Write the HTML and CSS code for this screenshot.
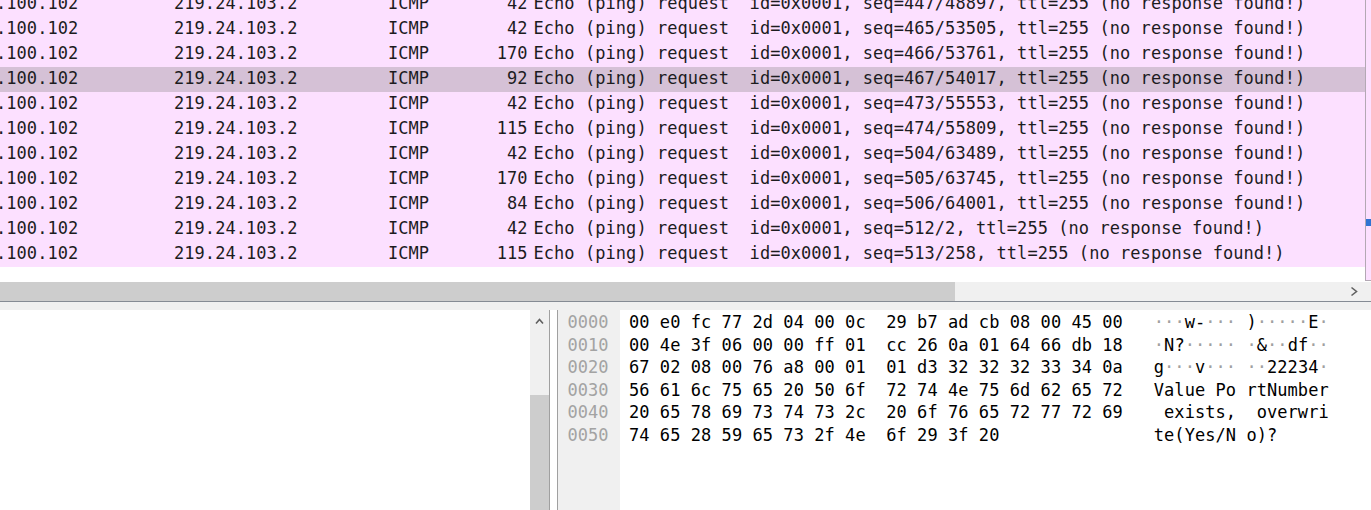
FILE: index.html
```html
<!DOCTYPE html>
<html>
<head>
<meta charset="utf-8">
<link rel="stylesheet" href="styles.css">
</head>
<body>
<div class="app">
  <div class="packets">
    <div class="list">
      <div class="rows">
        <div class="row"><span class="c-src">.100.102</span><span class="c-dst">219.24.103.2</span><span class="c-proto">ICMP</span><span class="c-len">42</span><span class="c-info">Echo (ping) request  id=0x0001, seq=447/48897, ttl=255 (no response found!)</span></div>
        <div class="row"><span class="c-src">.100.102</span><span class="c-dst">219.24.103.2</span><span class="c-proto">ICMP</span><span class="c-len">42</span><span class="c-info">Echo (ping) request  id=0x0001, seq=465/53505, ttl=255 (no response found!)</span></div>
        <div class="row"><span class="c-src">.100.102</span><span class="c-dst">219.24.103.2</span><span class="c-proto">ICMP</span><span class="c-len">170</span><span class="c-info">Echo (ping) request  id=0x0001, seq=466/53761, ttl=255 (no response found!)</span></div>
        <div class="row selected"><span class="c-src">.100.102</span><span class="c-dst">219.24.103.2</span><span class="c-proto">ICMP</span><span class="c-len">92</span><span class="c-info">Echo (ping) request  id=0x0001, seq=467/54017, ttl=255 (no response found!)</span></div>
        <div class="row"><span class="c-src">.100.102</span><span class="c-dst">219.24.103.2</span><span class="c-proto">ICMP</span><span class="c-len">42</span><span class="c-info">Echo (ping) request  id=0x0001, seq=473/55553, ttl=255 (no response found!)</span></div>
        <div class="row"><span class="c-src">.100.102</span><span class="c-dst">219.24.103.2</span><span class="c-proto">ICMP</span><span class="c-len">115</span><span class="c-info">Echo (ping) request  id=0x0001, seq=474/55809, ttl=255 (no response found!)</span></div>
        <div class="row"><span class="c-src">.100.102</span><span class="c-dst">219.24.103.2</span><span class="c-proto">ICMP</span><span class="c-len">42</span><span class="c-info">Echo (ping) request  id=0x0001, seq=504/63489, ttl=255 (no response found!)</span></div>
        <div class="row"><span class="c-src">.100.102</span><span class="c-dst">219.24.103.2</span><span class="c-proto">ICMP</span><span class="c-len">170</span><span class="c-info">Echo (ping) request  id=0x0001, seq=505/63745, ttl=255 (no response found!)</span></div>
        <div class="row"><span class="c-src">.100.102</span><span class="c-dst">219.24.103.2</span><span class="c-proto">ICMP</span><span class="c-len">84</span><span class="c-info">Echo (ping) request  id=0x0001, seq=506/64001, ttl=255 (no response found!)</span></div>
        <div class="row"><span class="c-src">.100.102</span><span class="c-dst">219.24.103.2</span><span class="c-proto">ICMP</span><span class="c-len">42</span><span class="c-info">Echo (ping) request  id=0x0001, seq=512/2, ttl=255 (no response found!)</span></div>
        <div class="row"><span class="c-src">.100.102</span><span class="c-dst">219.24.103.2</span><span class="c-proto">ICMP</span><span class="c-len">115</span><span class="c-info">Echo (ping) request  id=0x0001, seq=513/258, ttl=255 (no response found!)</span></div>
      </div>
    </div>
    <div class="minimap"><div class="mark"></div></div>
  </div>

  <div class="hscroll">
    <div class="hthumb"></div>
    <div class="htrack">
      <svg class="arrow" width="20" height="19" viewBox="0 0 20 19"><polyline points="4.5,5.5 9.5,9.5 4.5,13.5" fill="none" stroke="#606060" stroke-width="1.6"/></svg>
    </div>
  </div>

  <div class="splitter"></div>

  <div class="details">
    <div class="tree"></div>
    <div class="vscroll">
      <div class="vtrack">
        <svg class="arrow" width="19" height="20" viewBox="0 0 19 20"><polyline points="6,13.5 9.5,9.5 13,13.5" fill="none" stroke="#606060" stroke-width="1.6"/></svg>
      </div>
      <div class="vthumb"></div>
    </div>
    <div class="divider"></div>
    <div class="bytes">
      <div class="offsets">
        <div class="line">0000</div>
        <div class="line">0010</div>
        <div class="line">0020</div>
        <div class="line">0030</div>
        <div class="line">0040</div>
        <div class="line">0050</div>
      </div>
      <div class="hex">
        <div class="line">00 e0 fc 77 2d 04 00 0c  29 b7 ad cb 08 00 45 00   <span class="np">···</span>w-<span class="np">···</span> )<span class="np">·····</span>E<span class="np">·</span></div>
        <div class="line">00 4e 3f 06 00 00 ff 01  cc 26 0a 01 64 66 db 18   <span class="np">·</span>N?<span class="np">·····</span> <span class="np">·</span>&amp;<span class="np">··</span>df<span class="np">··</span></div>
        <div class="line">67 02 08 00 76 a8 00 01  01 d3 32 32 32 33 34 0a   g<span class="np">···</span>v<span class="np">···</span> <span class="np">··</span>22234<span class="np">·</span></div>
        <div class="line">56 61 6c 75 65 20 50 6f  72 74 4e 75 6d 62 65 72   Value Po rtNumber</div>
        <div class="line">20 65 78 69 73 74 73 2c  20 6f 76 65 72 77 72 69    exists,  overwri</div>
        <div class="line">74 65 28 59 65 73 2f 4e  6f 29 3f 20               te(Yes/N o)? </div>
      </div>
    </div>
  </div>
</div>
</body>
</html>
```
FILE: styles.css
```css
html, body {
  margin: 0;
  padding: 0;
  background: #ffffff;
}

body {
  width: 1371px;
  height: 510px;
  overflow: hidden;
  font-family: "DejaVu Sans Mono", "Liberation Mono", monospace;
  font-size: 17px;
  letter-spacing: 0.055px;
}

.app {
  display: flex;
  flex-direction: column;
  width: 1371px;
  height: 510px;
}

/* ---------- packet list ---------- */
.packets {
  display: flex;
  height: 282px;
  flex: none;
}

.list {
  width: 1365px;
  flex: none;
  overflow: hidden;
  background: #ffffff;
}

.rows {
  margin-top: -8px;
}

.row {
  display: grid;
  grid-template-columns: 178px 214px 60px 79.5px 1fr;
  height: 25px;
  box-sizing: border-box;
  padding-bottom: 2px;
  line-height: 23px;
  margin-left: -4px;
  background: #fce0ff;
  color: #1c1c1e;
  white-space: pre;
}

.row.selected {
  background: #d5c1d6;
}

.c-len {
  text-align: right;
}

.c-info {
  padding-left: 6px;
}

.minimap {
  width: 5px;
  height: 280px;
  flex: none;
  background: #fce0ff;
  border-left: 1px solid #b3a8b4;
  border-bottom: 1px solid #b3a8b4;
}

.mark {
  margin-top: 219px;
  height: 7px;
  background: #2f74d3;
}

/* ---------- horizontal scrollbar ---------- */
.hscroll {
  display: flex;
  height: 19px;
  flex: none;
}

.hthumb {
  width: 955px;
  background: #cdcdcd;
}

.htrack {
  flex: 1;
  background: #f0f0f0;
  display: flex;
  justify-content: flex-end;
  padding-right: 4px;
}

.arrow {
  display: block;
}

.splitter {
  height: 8px;
  flex: none;
  background: #f0f0f0;
  border-top: 1px solid #858b94;
}

/* ---------- details / bytes ---------- */
.details {
  display: flex;
  flex: 1;
  min-height: 0;
}

.tree {
  width: 530px;
  flex: none;
  background: #ffffff;
}

.vscroll {
  width: 19px;
  flex: none;
  display: flex;
  flex-direction: column;
}

.vtrack {
  height: 85px;
  background: #f0f0f0;
}

.vthumb {
  flex: 1;
  background: #cdcdcd;
}

.divider {
  width: 7px;
  flex: none;
  border-left: 1px solid #a0a0a0;
  border-right: 1px solid #a0a0a0;
  background: #ffffff;
}

.bytes {
  display: flex;
  flex: 1;
  line-height: 22.5px;
}

.line {
  white-space: pre;
  height: 22.5px;
}

.offsets {
  width: 62px;
  box-sizing: border-box;
  padding-left: 9.5px;
  padding-top: 1px;
  background: #f0f0f0;
  color: #a3a3a3;
}

.hex {
  flex: 1;
  padding-left: 9px;
  padding-top: 1px;
  color: #000000;
}

.np {
  color: #a0a0a0;
}
```
